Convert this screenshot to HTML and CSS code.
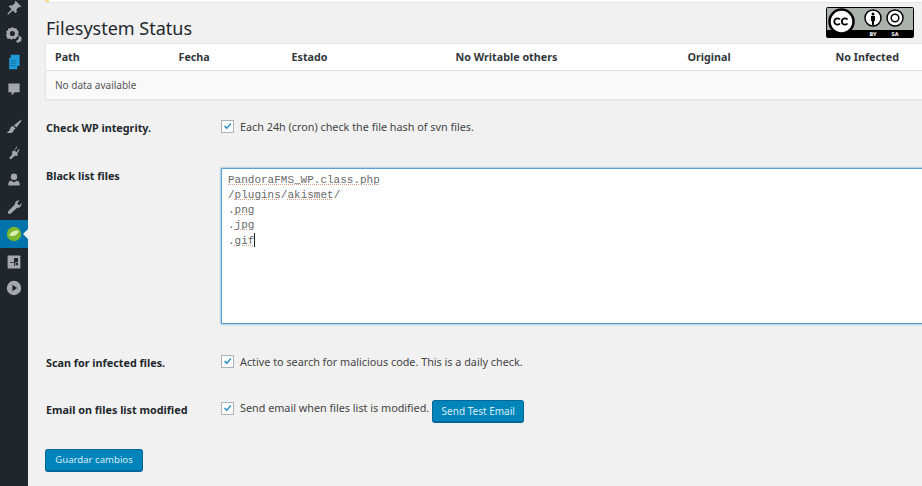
FILE: index.html
```html
<!DOCTYPE html>
<html lang="en">
<head>
<meta charset="utf-8">
<title>Filesystem Status</title>
<link rel="stylesheet" href="styles.css">
</head>
<body>
<div class="app">
  <nav class="side">
    <svg class="ic first" viewBox="0 0 20 20"><path d="M12 1l7 7-1.500 1-1-.5-3.500 3.500.5 3-1.500 1.500-3.500-3.500L3 18l-1 0 0-1 5-5.500L3.500 8 5 6.500l3 .5L11.500 3.500 11 2.500z"/></svg>
    <svg class="ic" viewBox="0 0 20 20"><path fill-rule="evenodd" d="M8 0l2 1.500 3 0 1 2.500 2 2-1 3 1 2-2.500 1.500-1.500 2.500-3-.5-2 1.500-2-1.500-3 .5-1-2.500L0 10l1-2-1-2.500L2.500 4 3 1.500l3 0zM8 5a3.200 3.200 0 100 6.400A3.200 3.200 0 008 5z"/><path fill-rule="evenodd" d="M16 11l2 1 2 2-1 2 0 2-2 0-1 2-2-1-1 0 0-2 2-1 1-2z"/></svg>
    <svg class="ic blue" viewBox="0 0 20 20"><path d="M6 1h11v14h-3v4H4V5h2z"/><path class="gap" d="M6 8h6v1H6zM6 11h6v1H6zM6 14h6v1H6z"/></svg>
    <svg class="ic" viewBox="0 0 20 20"><path d="M3 3h14v11h-6l-4 4v-4H3z"/></svg>
    <svg class="ic gap1" viewBox="0 0 20 20"><path d="M19 2L10 9l3 3 6-8zM9 10l3 3-2 2-2 3c-2 1-5 1-7 0 2-1 3-2 4-4 0-2 2-4 4-4z"/></svg>
    <svg class="ic" viewBox="0 0 20 20"><path d="M13 2l1 1-3 4 2 2 3-4 1 1-3 5 1 1-2 2-1-1-3 2-3 3-2-2 3-3 1-3-1-1 2-2 1 1z"/></svg>
    <svg class="ic" viewBox="0 0 20 20"><circle cx="10" cy="6" r="4"/><path d="M3 17v-3c1-3 3-3 4-3l3 2 3-2c1 0 3 0 4 3v3z"/></svg>
    <svg class="ic" viewBox="0 0 20 20"><path d="M17 2l-3 3 1 2 2 1 2-3c1 3-1 6-5 6L6 18c-2 2-5-1-3-3l8-8c0-4 3-6 6-5z"/></svg>
    <div class="active">
      <svg class="ic-active" viewBox="0 0 20 20"><circle cx="10" cy="10" r="9" fill="#7cb82f"/><path d="M4 12c2-5 7-7 12-6-1 5-6 8-12 6z" fill="#d9efb2"/></svg>
    </div>
    <svg class="ic tight" viewBox="0 0 20 20"><path fill-rule="evenodd" d="M2 2h16v16H2zM10 5v5H5v1h5v4h1v-4h1v3h3v-3h-3v-1h3V5z"/></svg>
    <svg class="ic" viewBox="0 0 20 20"><path fill-rule="evenodd" d="M10 1a9 9 0 110 18 9 9 0 010-18zM8 6v8l6-4z"/></svg>
  </nav>
  <main class="main">
    <div class="notice"></div>
    <header class="head">
      <h2 class="title">Filesystem Status</h2>
      <svg class="cc" viewBox="0 0 88 31">
        <rect x=".5" y=".5" width="87" height="30" rx="1" fill="#aab2ab" stroke="#000"/>
        <path d="M1 23h86v7H1z" fill="#000"/>
        <circle cx="15.500" cy="14.500" r="12" fill="#fff" stroke="#000" stroke-width="2.500"/>
        <path d="M14 12.500a3.200 3.200 0 100 4M21.500 12.500a3.200 3.200 0 100 4" fill="none" stroke="#000" stroke-width="1.800"/>
        <circle cx="47" cy="11" r="8" fill="#fff" stroke="#000" stroke-width="1.500"/>
        <circle cx="47" cy="7" r="1.500"/><path d="M45 9h4v5h-1v4h-2v-4h-1z"/>
        <circle cx="69" cy="11" r="8" fill="#fff" stroke="#000" stroke-width="1.500"/>
        <circle cx="69" cy="11" r="3.800" fill="none" stroke="#000" stroke-width="1.500"/>
        <text x="47" y="29" class="cc-t">BY</text>
        <text x="69" y="29" class="cc-t">SA</text>
      </svg>
    </header>
    <table class="grid">
      <colgroup><col class="c1"><col class="c2"><col class="c3"><col class="c4"><col class="c5"><col></colgroup>
      <thead>
        <tr><th>Path</th><th>Fecha</th><th>Estado</th><th>No Writable others</th><th>Original</th><th>No Infected</th></tr>
      </thead>
      <tbody>
        <tr><td colspan="6">No data available</td></tr>
      </tbody>
    </table>
    <form class="form">
      <div class="row r-check">
        <div class="lab">Check WP integrity.</div>
        <label class="val"><span class="box"><svg viewBox="0 0 16 16"><path d="M3 8l1.500-1.500L7 9l5-6 1.500 1.300L7 12z"/></svg></span>Each 24h (cron) check the file hash of svn files.</label>
      </div>
      <div class="row r-black">
        <div class="lab">Black list files</div>
        <div class="area"><span class="w">PandoraFMS_WP.class.php</span>
/<span class="w">plugins</span>/<span class="w">akismet</span>/
.<span class="w">png</span>
.<span class="w">jpg</span>
.<span class="w">gif</span><span class="caret"></span></div>
      </div>
      <div class="row r-scan">
        <div class="lab">Scan for infected files.</div>
        <label class="val"><span class="box"><svg viewBox="0 0 16 16"><path d="M3 8l1.500-1.500L7 9l5-6 1.500 1.300L7 12z"/></svg></span>Active to search for malicious code. This is a daily check.</label>
      </div>
      <div class="row r-mail">
        <div class="lab">Email on files list modified</div>
        <div class="val"><span class="box"><svg viewBox="0 0 16 16"><path d="M3 8l1.500-1.500L7 9l5-6 1.500 1.300L7 12z"/></svg></span>Send email when files list is modified.<button type="button" class="btn test">Send Test Email</button></div>
      </div>
      <button type="button" class="btn save">Guardar cambios</button>
    </form>
  </main>
</div>
</body>
</html>
```
FILE: styles.css
```css
html, body { margin: 0; height: 100%; overflow: hidden; background: #f1f1f1; }
body { font-family: "Noto Sans", "Open Sans", sans-serif; font-size: 12px; color: #444; }
.app { display: flex; height: 486px; width: 922px; overflow: hidden; }

.side { width: 28px; flex: none; background: #20262c; display: flex; flex-direction: column; align-items: center; }
.ic { width: 16px; height: 16px; fill: #a4a8ac; flex: none; margin-bottom: 11px; }
.ic.blue { fill: #1e9ad6; }
.ic .gap { fill: #0e5f88; }
.ic.gap1 { margin-top: 10px; }
.ic.tight { margin-bottom: 10px; }
.active { width: 28px; height: 28px; margin: -6px 0 6px; background: #0073aa; display: flex; align-items: center; justify-content: center; position: relative; flex: none; }
.active::after { content: ""; position: absolute; right: 0; top: 9px; border: 5px solid transparent; border-right-color: #f1f1f1; border-left: 0; }
.ic-active { width: 16px; height: 16px; }

.main { flex: 1; min-width: 0; padding-left: 17px; position: relative; }
.notice { height: 2px; background: #fff; border-left: 4px solid #ffd98a; box-shadow: 0 1px 1px rgba(0,0,0,.05); }
.head { display: flex; justify-content: space-between; align-items: flex-start; height: 41px; padding-right: 8px; }
.title { margin: 14px 0 0 1px; font-size: 18px; line-height: 24px; font-weight: 400; color: #23282d; }
.cc { width: 88px; height: 31px; margin-top: 5px; flex: none; }
.cc-t { font: 700 5px "DejaVu Sans", sans-serif; fill: #fff; text-anchor: middle; }

.grid { width: 877px; border-collapse: collapse; table-layout: fixed; background: #f9f9f9; border: 1px solid #e5e5e5; border-right: 0; box-shadow: 0 1px 1px rgba(0,0,0,.04); }
.c1 { width: 124px; } .c2 { width: 113px; } .c3 { width: 164px; } .c4 { width: 232px; } .c5 { width: 148px; }
.grid th { background: #fff; height: 26px; padding: 0 0 0 9px; text-align: left; font-weight: 700; color: #32373c; font-size: 10.750px; border-bottom: 1px solid #e1e1e1; }
.grid td { height: 29px; padding: 0 0 1px 9px; box-sizing: border-box; font-size: 10px; color: #555; }

.row { display: grid; grid-template-columns: 176px 1fr; }
.lab { font-weight: 700; color: #23282d; font-size: 10.800px; line-height: 16px; white-space: nowrap; padding-left: 1px; }
.val { display: flex; align-items: center; font-size: 10.800px; line-height: 16px; color: #444; white-space: nowrap; }
.box { width: 13px; height: 13px; box-sizing: border-box; border: 1px solid #a9b4bb; background: #fdfdfd; margin-right: 6px; flex: none; display: block; }
.box svg { display: block; width: 11px; height: 11px; fill: #1e8cbe; }
.r-check { margin-top: 17px; }
.r-check .lab { padding-top: 3px; }
.r-black { margin-top: 32px; }
.area { height: 156px; box-sizing: border-box; width: 720px; border: 1px solid #5b9dd9; box-shadow: 0 0 2px rgba(30,140,190,.8); background: #fff; padding: 4px 6px; font: 11px/15px "Liberation Mono", monospace; color: #6a6a6a; white-space: pre; }
.w { text-decoration: underline dotted #d8a08a; }
.caret { display: inline-block; width: 1px; height: 14px; background: #222; vertical-align: -3px; }
.r-scan { margin-top: 28px; }
.r-scan .lab { padding-top: 3px; }
.r-mail { margin-top: 29px; }
.r-mail .lab { padding-top: 2px; }
.r-mail .val { height: 23px; align-items: flex-start; align-self: start; }
.r-mail .box { margin-top: 2px; }
.btn { font: 10px/20px "Noto Sans", "Open Sans", sans-serif; background: #0085ba; border: 1px solid #006799; border-bottom-width: 2px; border-radius: 3px; color: #d8edf6; height: 23px; box-sizing: border-box; padding: 0; }
.test { margin-left: 3px; width: 92px; }
.save { display: block; margin-top: 26px; width: 98px; font-size: 9.600px; }
```
